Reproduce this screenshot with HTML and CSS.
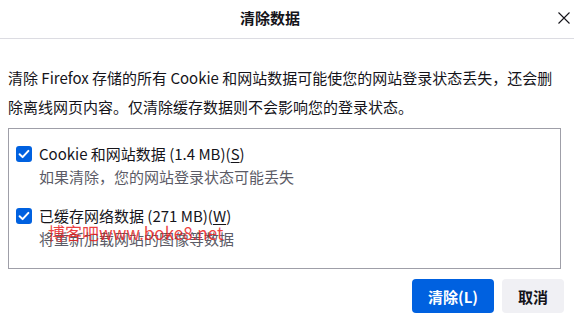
FILE: index.html
```html
<!DOCTYPE html>
<html lang="zh-CN">
<head>
<meta charset="utf-8">
<title>清除数据</title>
<link rel="stylesheet" href="styles.css">
</head>
<body>
<div class="dialog">
  <header class="head">
    <h1 class="title">清除数据</h1>
    <button class="close" aria-label="关闭">
      <svg width="12" height="12" viewBox="0 0 12 12"><path d="M0.5 0.5L11.5 11.5M11.5 0.5L0.5 11.5" stroke="#15141a" stroke-width="1.1" fill="none"/></svg>
    </button>
  </header>
  <main class="content">
    <p class="intro">清除 Firefox 存储的所有 Cookie 和网站数据可能使您的网站登录状态丢失，还会删除离线网页内容。仅清除缓存数据则不会影响您的登录状态。</p>
    <div class="box">
      <div class="item">
        <span class="check"><svg width="16" height="16" viewBox="0 0 16 16"><path d="M3.6 8.2L6.6 11.1L12.4 4.9" stroke="#fff" stroke-width="2" fill="none" stroke-linecap="round" stroke-linejoin="round"/></svg></span>
        <span class="label">Cookie 和网站数据 (1.4 MB)(<u>S</u>)</span>
        <span class="desc">如果清除，您的网站登录状态可能丢失</span>
      </div>
      <div class="item">
        <span class="check"><svg width="16" height="16" viewBox="0 0 16 16"><path d="M3.6 8.2L6.6 11.1L12.4 4.9" stroke="#fff" stroke-width="2" fill="none" stroke-linecap="round" stroke-linejoin="round"/></svg></span>
        <span class="label">已缓存网络数据 (271 MB)(<u>W</u>)</span>
        <span class="desc">将重新加载网站的图像等数据</span>
      </div>
    </div>
  </main>
  <footer class="actions">
    <button class="btn primary">清除(L)</button>
    <button class="btn">取消</button>
  </footer>
  <div class="watermark">博客吧www.boke8.net</div>
</div>
</body>
</html>
```
FILE: styles.css
```css
* { box-sizing: border-box; }
html, body { margin: 0; padding: 0; background: #fff; }
body {
  font-family: "Noto Sans CJK SC", "Noto Sans", sans-serif;
  color: #15141a;
  font-size: 15px;
}
.dialog { position: relative; width: 574px; height: 321px; }
.head {
  height: 39px;
  border-bottom: 1px solid #dcdce2;
  display: flex;
  align-items: center;
}
.title {
  margin: 0 0 3px 240px;
  font-size: 15px;
  font-weight: 700;
  line-height: 20px;
}
.close {
  margin: 0 4px 3px auto;
  padding: 0;
  border: 0;
  background: none;
  width: 12px;
  height: 12px;
  display: flex;
}
.content { padding: 0 13px 0 8px; }
.intro {
  margin: 24px 0 7px;
  line-height: 29px;
}
.box {
  border: 1px solid #9f9fa8;
  height: 141px;
  padding: 14px 7px 0;
  display: flex;
  flex-direction: column;
  gap: 17px;
}
.item {
  display: grid;
  grid-template-columns: 16px 1fr;
  column-gap: 7px;
  row-gap: 1px;
  align-items: center;
  line-height: 22px;
}
.check {
  width: 16px;
  height: 16px;
  border-radius: 3px;
  background: #0061e0;
  display: flex;
}
.label { grid-column: 2; }
.label u { text-underline-offset: 2px; }
.desc { grid-column: 2; color: #5b5b66; }
.actions {
  display: flex;
  justify-content: flex-end;
  gap: 8px;
  padding: 10px 10px 0 0;
}
.btn {
  height: 34px;
  padding: 0 16px;
  border: 0;
  border-radius: 4px;
  background: #f0f0f4;
  color: #15141a;
  font-family: "Noto Sans CJK SC", "Noto Sans", sans-serif;
  font-size: 15px;
  font-weight: 700;
}
.btn.primary { background: #0061e0; color: #fff; }
.watermark {
  position: absolute;
  left: 48px;
  top: 222px;
  color: rgba(232, 30, 30, 0.85);
  font-size: 17px;
  line-height: 22px;
  font-family: "Noto Sans CJK SC", "Noto Sans", sans-serif;
}
```
